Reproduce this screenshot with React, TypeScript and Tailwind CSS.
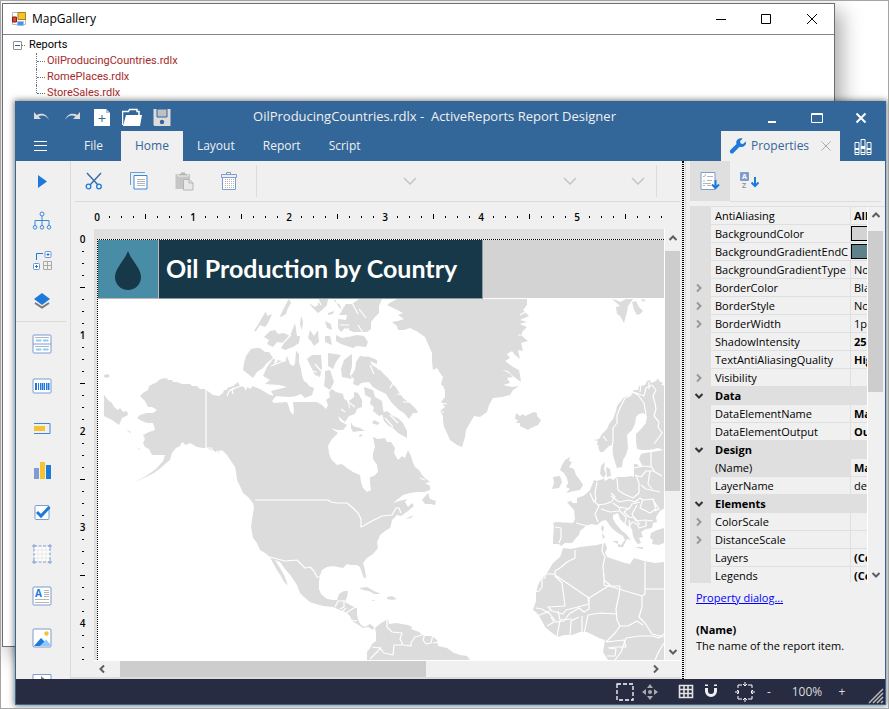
import { type ReactNode } from "react";
import clsx from "clsx";

const reports = ["OilProducingCountries.rdlx", "RomePlaces.rdlx", "StoreSales.rdlx"];

const ribbonTabs = ["File", "Home", "Layout", "Report", "Script"];

interface PropertyRow {
  name: string;
  value?: string;
  bold?: boolean;
  swatch?: string;
  expandable?: boolean;
  category?: boolean;
  selected?: boolean;
}

const properties: PropertyRow[] = [
  { name: "AntiAliasing", value: "All", bold: true },
  { name: "BackgroundColor", swatch: "bg-[#d3d3d3]" },
  { name: "BackgroundGradientEndColor", swatch: "bg-[#5f818c]" },
  { name: "BackgroundGradientType", value: "None" },
  { name: "BorderColor", value: "Black", expandable: true },
  { name: "BorderStyle", value: "None", expandable: true },
  { name: "BorderWidth", value: "1pt", expandable: true },
  { name: "ShadowIntensity", value: "25", bold: true },
  { name: "TextAntiAliasingQuality", value: "High", bold: true },
  { name: "Visibility", expandable: true },
  { name: "Data", category: true },
  { name: "DataElementName", value: "Map1", bold: true },
  { name: "DataElementOutput", value: "Output", bold: true },
  { name: "Design", category: true },
  { name: "(Name)", value: "Map1", bold: true, selected: true },
  { name: "LayerName", value: "default" },
  { name: "Elements", category: true },
  { name: "ColorScale", expandable: true },
  { name: "DistanceScale", expandable: true },
  { name: "Layers", value: "(Collection)", bold: true },
  { name: "Legends", value: "(Collection)", bold: true },
];

interface ChevronProps {
  dir: "up" | "down" | "left" | "right";
  className?: string;
}

const chevronPaths = {
  up: "M1.5 7 5 3.5 8.5 7",
  down: "M1.5 3 5 6.5 8.5 3",
  left: "M7 1.5 3.5 5 7 8.5",
  right: "M3 1.5 6.5 5 3 8.5",
};

function Chevron({ dir, className }: ChevronProps) {
  return (
    <svg viewBox="0 0 10 10" className={clsx("h-[10px] w-[10px]", className)} fill="none" stroke="currentColor" strokeWidth="2">
      <path d={chevronPaths[dir]} />
    </svg>
  );
}

function Icon({ size = 20, children }: { size?: number; children: ReactNode }) {
  return (
    <svg width={size} height={size} viewBox={`0 0 ${size} ${size}`} fill="none" className="shrink-0">
      {children}
    </svg>
  );
}

/* ---------- Gallery window ---------- */

function GalleryWindow() {
  return (
    <section className="absolute top-[2px] right-[53px] bottom-[61px] left-px flex flex-col border border-[#6e6e72] bg-white shadow-[6px_8px_20px_rgba(0,0,0,0.35)]">
      <header className="flex h-[31px] shrink-0 items-center border-b border-[#7f8589] pl-2">
        <Icon size={16}>
          <path d="M1.5 1.5h13v12h-13z" fill="#fff" stroke="#b9b9b9" />
          <path d="M7 1.500h7.500v7H7z" fill="#f6c32c" stroke="#a8801a" />
          <path d="M1.500 6h4v5h-4z" fill="#d64a32" stroke="#8c1b14" />
          <path d="M6.500 10.500h6v4h-6z" fill="#4f8fe6" stroke="#9dbdea" />
        </Icon>
        <h1 className="ml-[5px] flex-1 text-[12px] text-black">MapGallery</h1>
        <div className="flex text-black">
          <button aria-label="Minimize" className="flex h-7 w-[45px] items-center justify-center">
            <Icon size={12}><path d="M1 6.500h10" stroke="currentColor" /></Icon>
          </button>
          <button aria-label="Maximize" className="flex h-7 w-[46px] items-center justify-center">
            <Icon size={12}><path d="M1.500 1.500h9v9h-9z" stroke="currentColor" /></Icon>
          </button>
          <button aria-label="Close" className="flex h-7 w-[45px] items-center justify-center">
            <Icon size={12}><path d="m1 1 10 10M11 1 1 11" stroke="currentColor" /></Icon>
          </button>
        </div>
      </header>

      {/* Report tree */}
      <div className="pt-[2px] pl-[10px] font-['Roboto','Liberation_Sans',sans-serif] text-[11px] leading-4 text-black">
        <div className="flex items-center">
          <button aria-label="Collapse Reports" className="flex h-[9px] w-[9px] items-center justify-center rounded-[1px] border border-[#8f8f8f]">
            <span className="h-px w-[5px] bg-[#3b52a0]" />
          </button>
          <span className="mr-1 w-[3px] border-t border-dotted border-gray-500" />
          Reports
        </div>
        <ul className="ml-[23px]">
          {reports.map((name, i) => (
            <li key={name} className="flex h-4 text-[#a52a2a]">
              <span className={clsx("w-px border-l border-dotted border-gray-500", i === reports.length - 1 ? "h-2" : "h-4")} />
              <span className="mt-2 mr-[2px] w-2 border-t border-dotted border-gray-500" />
              <a href="#report">{name}</a>
            </li>
          ))}
        </ul>
      </div>
    </section>
  );
}

/* ---------- Designer title bar ---------- */

function TitleBar() {
  return (
    <header className="shrink-0 bg-[#336699] text-[#f0f0f0]">
      <div className="relative flex h-[30px] items-center justify-between pr-[2px] pl-[16px]">
        <div className="flex items-center gap-[10px] pt-1">
          <button aria-label="Undo">
            <Icon>
              <path d="M2 4v7h7L6.500 8.600C10 6.600 14 7.500 17 12 14.500 5.500 9 4.500 4.700 7z" fill="#dcdcdc" />
            </Icon>
          </button>
          <button aria-label="Redo">
            <Icon>
              <path d="M18 4v7h-7l2.500-2.400C10 6.600 6 7.500 3 12 5.500 5.500 11 4.500 15.300 7z" fill="#dcdcdc" />
            </Icon>
          </button>
          <button aria-label="New report">
            <Icon>
              <path d="M2 1h12l4 4v13H2z" fill="#fff" />
              <path d="M14 1v4h4z" fill="#a9c5e4" />
              <path d="M10 7v7M6.500 10.500h7" stroke="#336699" />
            </Icon>
          </button>
          <button aria-label="Open report">
            <Icon>
              <path d="M.5 17V3.500h6l1-2H15v2h2V7" stroke="#fff" strokeWidth="1.500" />
              <path d="m1 18 3-11h16l-2 11z" fill="#fff" />
            </Icon>
          </button>
          <button aria-label="Save report">
            <Icon>
              <path d="M1.500 1h17v17h-16l-1-1z" fill="#dcdcdc" />
              <path d="M5 1h10v8H5z" fill="#c0c0c0" stroke="#336699" />
              <circle cx="10" cy="14" r="2.200" fill="#336699" />
            </Icon>
          </button>
        </div>
        <h2 className="absolute inset-x-0 top-[6px] mx-auto w-fit pr-8 text-[13px] leading-[18px] whitespace-pre">
          OilProducingCountries.rdlx -{"  "}ActiveReports Report Designer
        </h2>
        <div className="flex pt-1">
          <button aria-label="Minimize designer" className="flex h-6 w-[44px] items-center justify-center">
            <Icon size={12}><path d="M2 10h8" stroke="#fff" strokeWidth="2" /></Icon>
          </button>
          <button aria-label="Maximize designer" className="flex h-6 w-[45px] items-center justify-center">
            <Icon size={12}><path d="M.5 1.500h11v9H.5zM.5 2.500h11" stroke="#fff" /></Icon>
          </button>
          <button aria-label="Close designer" className="flex h-6 w-[44px] items-center justify-center">
            <Icon size={12}><path d="m1.500 1.500 9 9M10.500 1.500l-9 9" stroke="#fff" strokeWidth="2" /></Icon>
          </button>
        </div>
      </div>

      <div className="flex h-[30px]">
        <button aria-label="Menu" className="flex w-[49px] items-center justify-center">
          <Icon size={14}><path d="M0 2.500h13M0 6.500h13M0 11.500h13" stroke="#fff" /></Icon>
        </button>
        <nav className="flex flex-1 pl-[5px] text-[12px]">
          {ribbonTabs.map((tab) => (
            <button
              key={tab}
              className={clsx("px-[14px]", tab === "Home" && "bg-[#f0f0f0] text-[#336699]", tab === "File" && "mr-1")}
            >
              {tab}
            </button>
          ))}
        </nav>
        <div className="flex w-[119px] items-center bg-[#f0f0f0] px-2 text-[12px] text-[#336699]">
          <Icon size={18}>
            <path
              d="M16.800 4.400 14 7.100l-2.300-.6-.7-2.300 2.700-2.800C11 .6 8 1.700 7.300 4.500c-.2 1 0 1.700.2 2.400L1.400 13c-1.700 2 .9 4.700 3 3l6.100-6.200c3.600 1.100 7.400-1.900 6.300-5.400z"
              fill="#1d7adb"
            />
          </Icon>
          <span className="ml-1 flex-1">Properties</span>
          <button aria-label="Close Properties">
            <Icon size={12}><path d="m1.500 1.500 9 9M10.500 1.500l-9 9" stroke="#aaa" /></Icon>
          </button>
        </div>
        <button aria-label="Library" className="flex w-[45px] items-center justify-center pt-[2px]">
          <Icon size={18}>
            <path d="M1 4.500h4v12H1zM7 1.500h4v15H7zM13 4.500h4v12h-4z" stroke="#fff" />
            <path d="M1 10h4v2H1zM7 8h4v3H7zM13 10h4v2h-4zM1 14h4v1H1zM7 14h4v1H7zM13 14h4v1h-4z" fill="#fff" />
          </Icon>
        </button>
      </div>
    </header>
  );
}

/* ---------- Left toolbox ---------- */

const viewTools: { label: string; icon: ReactNode }[] = [
  { label: "Preview", icon: <path d="m6 4 9 6.500L6 17z" fill="#1d7adb" /> },
  {
    label: "Report explorer",
    icon: (
      <path
        d="M10 5v10M3 15v-5.500h14V15M10 1a2 2 0 1 1 0 4 2 2 0 0 1 0-4zM3 14.500a1.800 1.800 0 1 1 0 3.600 1.800 1.800 0 0 1 0-3.600zM10 14.500a1.800 1.800 0 1 1 0 3.600 1.800 1.800 0 0 1 0-3.600zM17 14.500a1.800 1.800 0 1 1 0 3.600 1.800 1.800 0 0 1 0-3.600z"
        stroke="#3b88d8"
      />
    ),
  },
  {
    label: "Group editor",
    icon: (
      <>
        <path d="M4.500 9V2.500H11" stroke="#1d7adb" />
        <rect x="13" y=".5" width="6" height="6" rx="1" fill="#fff" stroke="#6f93cf" />
        <rect x="1.500" y="12.500" width="6" height="6" rx="1" fill="#fff" stroke="#6f93cf" />
        <path d="M16 2v3M14.500 3.500h3M4.500 14v3M3 15.500h3" stroke="#1d7adb" />
        <path d="M11.500 10.500h8v8h-8zM15.500 10.500v8M11.500 14.500h8" stroke="#aaa" />
      </>
    ),
  },
  {
    label: "Layers",
    icon: (
      <>
        <path d="m3 12 7 4.500 7-4.500" stroke="#7a7a7a" strokeWidth="2" />
        <path d="m10 2 8 6-8 6-8-6z" fill="#1d7adb" />
      </>
    ),
  },
];

const insertTools: { label: string; icon: ReactNode }[] = [
  {
    label: "Banded list",
    icon: (
      <>
        <rect x="1" y="1" width="18" height="18" rx="1" fill="#fff" stroke="#7f9bd0" />
        <path d="M1 10h18" stroke="#7f9bd0" />
        <path d="M3 3.500h14M3 12.500h14" stroke="#b5b5b5" />
        <path d="M4 6.500h5.500M11 6.500h5.500M4 15.500h5.500M11 15.500h5.500" stroke="#92c8fa" strokeWidth="2" />
      </>
    ),
  },
  {
    label: "Barcode",
    icon: (
      <>
        <rect x="1" y="3" width="18" height="14" rx="1" fill="#fff" stroke="#7f9bd0" />
        <path d="M4 7v7M10.500 7v7M16.500 7v7" stroke="#1d7adb" strokeWidth="2" />
        <path d="M6.500 7v7M8.500 7v7M12.500 7v7M14.500 7v7" stroke="#1d7adb" />
      </>
    ),
  },
  {
    label: "Bullet",
    icon: (
      <>
        <path d="M2 5.500h16v10H2" stroke="#3b88d8" />
        <path d="M2 8h11v5H2z" fill="#f6c333" />
      </>
    ),
  },
  {
    label: "Chart",
    icon: (
      <>
        <path d="M2 8h5v11H2z" fill="#7f9bd0" />
        <path d="M8 2h5v17H8z" fill="#f6c333" />
        <path d="M14 5h5v14h-5z" fill="#1d7adb" />
      </>
    ),
  },
  {
    label: "Check box",
    icon: (
      <>
        <rect x="3" y="3.500" width="14" height="14" rx="1" fill="#fff" stroke="#7f9bd0" />
        <path d="m5 10 4 4 8.500-9" stroke="#1d7adb" strokeWidth="3" />
      </>
    ),
  },
  {
    label: "Container",
    icon: (
      <>
        <path d="M2 2h16v16H2z" fill="#fff" />
        <path d="M6 2v16M10 2v16M14 2v16M2 6h16M2 10h16M2 14h16" stroke="#e8e8e8" />
        <path d="M2 2h16v16H2z" stroke="#7f9bd0" strokeDasharray="3 1.500" />
        <path d="M1 1h2v2H1zM17 1h2v2h-2zM1 17h2v2H1zM17 17h2v2h-2z" fill="#fff" stroke="#7f9bd0" />
      </>
    ),
  },
  {
    label: "Formatted text",
    icon: (
      <>
        <rect x="1" y="1" width="18" height="18" rx="1" fill="#fff" stroke="#7f9bd0" />
        <text x="3" y="11" fontSize="10" fontWeight="700" fill="#1d7adb">A</text>
        <path d="M12 4.500h5M12 6.500h5M12 8.500h5M12 10.500h5M3 13.500h14M3 16.500h14" stroke="#b5b5b5" />
      </>
    ),
  },
  {
    label: "Image",
    icon: (
      <>
        <rect x="1" y="1" width="18" height="18" rx="1" fill="#fff" stroke="#7f9bd0" />
        <path d="m8 18 6-6.500 5 5.500v1z" fill="#92c8fa" />
        <path d="m2 18 7-8 3.500 3.500L8 18z" fill="#1d7adb" />
        <circle cx="14.500" cy="5.500" r="2.200" fill="#f6c333" />
      </>
    ),
  },
  {
    label: "Input field",
    icon: (
      <>
        <path d="M1 4.500h18V19H1z" fill="#fff" stroke="#7f9bd0" />
        <path d="M9 6v10l6-5z" fill="#777" />
      </>
    ),
  },
];

function Toolbox() {
  return (
    <aside className="flex w-[55px] shrink-0 flex-col overflow-hidden border-r border-[#dcdcdc]">
      {viewTools.map(({ label, icon }) => (
        <button key={label} aria-label={label} className="flex h-10 w-[52px] shrink-0 items-center justify-center">
          <Icon>{icon}</Icon>
        </button>
      ))}
      <hr className="mr-1 mb-px shrink-0 border-[#dcdcdc]" />
      {insertTools.map(({ label, icon }) => (
        <button key={label} aria-label={label} className="flex h-[42px] w-[52px] shrink-0 items-center justify-center">
          <Icon>{icon}</Icon>
        </button>
      ))}
    </aside>
  );
}

/* ---------- Ribbon ---------- */

function RibbonSelect({ label, className }: { label: string; className: string }) {
  return (
    <div className={clsx("relative flex items-center justify-end", className)}>
      <select disabled aria-label={label} className="absolute inset-0 w-full appearance-none bg-transparent" />
      <svg width="14" height="8" viewBox="0 0 14 8" fill="none" stroke="#c4c4c4" strokeWidth="1.500">
        <path d="m1 1 6 6 6-6" />
      </svg>
    </div>
  );
}

function Ribbon() {
  return (
    <div className="ml-1 flex h-[41px] shrink-0 border-b border-[#dcdcdc]">
      <button aria-label="Cut" className="flex w-[37px] items-center justify-center">
        <Icon>
          <path d="m3 2 11 12M17 2 6 14" stroke="#3b6fa8" strokeWidth="1.500" />
          <circle cx="4.500" cy="15.500" r="2.300" stroke="#1d7adb" strokeWidth="1.300" />
          <circle cx="15" cy="15.500" r="2.300" stroke="#1d7adb" strokeWidth="1.300" />
        </Icon>
      </button>
      <button aria-label="Copy" className="ml-[8px] flex w-[37px] items-center justify-center">
        <Icon>
          <path d="M1.500 14V1.500H16" stroke="#6f9bd0" />
          <path d="M5 4.500h13V18H5z" fill="#fff" stroke="#3b88d8" />
          <path d="M8 8.500h8M8 10.500h8M8 12.500h8M8 14.500h8" stroke="#b5b5b5" />
        </Icon>
      </button>
      <button aria-label="Paste" className="ml-[8px] flex w-[37px] items-center justify-center">
        <Icon>
          <path d="M1.500 3H16v5h-5v10H1.500z" fill="#c6c6c6" />
          <path d="M4 5h10V2.500h-2.500V1h-5v1.500H4z" fill="#b5b5b5" stroke="#f0f0f0" />
          <path d="M9.500 8.500h6L19 12v7H9.500z" fill="#e9e9e9" stroke="#b5b5b5" />
          <path d="M15 8.500V12h4" stroke="#b5b5b5" />
        </Icon>
      </button>
      <button aria-label="Delete" className="ml-[8px] mr-[9px] flex w-[37px] items-center justify-center">
        <Icon>
          <path d="M3.500 6h13v12.500h-13z" fill="#fff" stroke="#7f9bd0" />
          <path d="M2.500 3.500h15v3h-15zM7.500 3V1.500h4V3" fill="#f0f0f0" stroke="#7f9bd0" />
          <path d="M6.500 8v9M8.500 8v9M10.500 8v9M12.500 8v9M14.500 8v9" stroke="#b5b5b5" strokeDasharray="1 1" />
        </Icon>
      </button>
      <div className="my-1 flex flex-1 border-l border-[#dcdcdc]">
        <RibbonSelect label="Font family" className="w-[160px]" />
        <RibbonSelect label="Font style" className="flex-1" />
        <RibbonSelect label="Font size" className="w-[68px]" />
        <span className="ml-[11px] border-l border-[#dcdcdc] pr-6" />
      </div>
    </div>
  );
}

/* ---------- Rulers ---------- */

function Ruler({ vertical }: { vertical?: boolean }) {
  const steps = vertical ? 36 : 48;
  return (
    <div
      className={clsx(
        "flex shrink-0 overflow-hidden text-[10px] leading-3 font-semibold text-black",
        vertical ? "w-[23px] flex-col pt-1" : "h-[27px] pl-5",
      )}
    >
      {Array.from({ length: steps }, (_, i) => (
        <span
          key={i}
          className={clsx("flex shrink-0 items-center justify-center", vertical ? "h-3" : "w-3 pt-[2px]")}
        >
          {i % 8 === 0 ? (
            i / 8
          ) : i % 4 === 0 ? (
            <span className={clsx("bg-black", vertical ? "h-px w-[5px]" : "h-[5px] w-px")} />
          ) : (
            <span className={clsx("bg-black", vertical ? "h-px w-[2px]" : "h-[2px] w-px")} />
          )}
        </span>
      ))}
    </div>
  );
}

/* ---------- Map ---------- */

const land = [
  // North and Central America
  "M140 396l3-3 5-3 1-4 8-4 2-2 5-2 2 1 0-2 2 3 4 0 1 2 4 0 5 2 8 0 2 2 5 0 3 3 5 0 4 3 4 3 6 1 4-3 1-3 3 0 0-2 6-2 5-4 2 4 4 1 2 4 1-4 4 2 1-3 8 3 5 3 5 3 6 1-4 5 2 2 13-1 2 5 1 4 3 4 1-3-1-10 24 0L322 405 326 409 328 405 326 400 330 397 329 392 332 389 336 392 343 394 344 399 348 401 349 409 353 404 356 410 355 414 349 416 345 422 338 416 340 421 347 425 343 430 337 430 331 428 338 433 335 436 332 439 328 446 329 453 331 459 337 465 342 464 347 468 353 472 360 475 361 482 363 488 367 492 371 490 370 484 370 477 374 476 378 472 377 465 373 459 373 453 375 447 373 437 378 439 385 438 387 442 391 442 395 448 394 453 398 460 402 456 405 458 408 450 411 456 413 463 415 467 419 470 422 475 425 478 430 482 425 483 430 486 430 490 424 492 417 492 410 493 403 495 398 499 393 503 399 501 407 499 405 502 408 507 412 503 414 506 408 511 401 516 397 515 392 520 391 525 390 528 385 531 380 535 379 538 377 542 378 548 373 554 367 558 363 563 365 570 366 578 364 578 362 573 360 567 357 565 351 565 347 564 343 568 338 567 333 566 327 567 322 570 320 575 319 582 319 589 321 594 327 599 333 600 337 600 339 594 344 591 348 591 347 597 345 602 352 606 357 608 357 614 358 620 361 625 365 627 370 624 374 627 373 630 368 627 363 628 357 624 352 621 350 616 347 613 340 610 333 607 323 606 316 604 310 602 304 597 300 593 297 585 291 576 285 569 280 562 275 560 280 568 284 575 288 585 284 582 281 576 277 570 273 563 270 557 265 553 260 550 257 543 253 538 252 532 251 527 252 520 253 513 254 508 253 503 248 497 243 493 240 486 237 480 236 472 235 467 231 461 227 455 222 450 218 453 213 451 207 448 203 448 197 447 190 443 186 445 182 442 180 446 176 448 172 453 170 460 166 463 162 467 154 473 146 477 133 483 146 476 156 469 163 461 165 455 159 455 152 455 149 449 145 447 143 443 145 439 143 435 149 432 155 430 154 426 153 423 147 423 142 421 137 418 140 415 147 413 153 413 157 410 152 407 148 407 145 401z",
  // Aleutian tip and Siberia
  "M104 395l5 6 2 1 4 6 3 2 2-2 3 4 4-1 1 4-6 3-3 7-7-5-8-4zM104 375l4-1 2 2-3 2-3-1zM126 429l5 3-1 1zM138 448l2 1-1 1z",
  // Arctic archipelago
  "M251 349l5-1 4 0 5 4 4 0 4 6-6 5-4 5-6 4-4 6-5-4-5-4 1-7 2-7z",
  "M273 359l-6 8-4 9 7 4-5 4 14 1 8 2-8 2-8 2 3 5 16 1 6-1 5-2 4 4 7-3 2-7-5-2-2-3-3-2-2-5-1-7-2-7 0-8-3-3-1 13-2 2-3-2-3-8-2 6-7-2-4 6 1-7z",
  "M254 331l5-8 4-7 3-5 1 5 5-2-4 9-3 4-5-2-4 6zM264 337l6-6 5-1 3 4 6-1 6 3 5-13 2 13 3 0-1 7-6 4-8 3-4-2 3-5-7-1-4 5-6-3 2-4z",
  "M280 316l4-8 3-6 2-3 2 4-3 5-2 6-5 3zM306 299l3 4 6 4 3-2 1-6 3 0 6 0-1 6-5 5-4 3-6-6zM301 316l2 5-1 9-2-5zM328 313l6-2-1 3-5 1zM310 330l4 6 4-6 1 12-5 4-3-5-3-3z",
  "M312 355l9 0 1 12-2 10-5-2-5-10-3-6zM325 321l6 3 1 6-5-2zM325 336l5 0 2 9-7-3zM328 353l13 2-5 7-3 7-5-3zM325 371l5-1 4 12-4 8-6-4 1-8z",
  "M335 299l3 7 4 4 4-6 6 0 7-5 23 0-3 7 0 7-4 4-4 5 0 7-4 3-14 0-8-4-4 4-3-4 0-9 8 1 1-5-8 0 3-4-2-6-6-4zM336 335l6 3 15-3 7 1 4 6-2 5-9-1-4 2-12-4-5-3z",
  "M344 360l5-4 3-2 0 12-2 8 2 5-5-1-5-1-1-8z",
  "M360 356l8 1 4 8 8 5 7 7 8 9 5 8 4 5 6 4 6 6 2 4-5 0-4 6-5-6-5-3-8-8-5-8-8-4-5-3-4-5-8 1-3 3-5-2 1-5-3-3 4-6 1-8zM367 356l10 4 0 4-7-3z",
  "M354 392l4 1 4 7 0 7-5 2-2 4-5-4-1-8 5-4zM364 387l9 3 2 7 7 4 1 8 1 5-5 2-6-5 1-4-4-3 1-6-6-3zM382 413l5-2 6 5 5 2 5 5 4 8 0 7-9-5-5-5-4-2-5-5zM351 422l2 4 7 2 5 3-5 0-7 1-2-4zM360 434l3 2-4 1zM374 420l6 3-3 2-5-2z",
  // Greenland and Iceland
  "M397 299L391 302 387 305 395 309 403 313 398 315 404 319 398 321 392 322 397 326 398 330 404 330 410 328 418 332 425 337 428 344 432 353 432 362 433 370 437 368 440 373 443 377 441 384 445 390 445 397 441 402 445 407 440 411 443 416 443 420 444 427 447 433 450 440 457 445 462 447 465 437 466 430 470 423 474 416 480 417 487 412 489 405 493 398 502 397 510 395 513 390 519 386 512 387 503 385 510 383 507 378 513 377 509 373 502 370 508 371 513 376 521 382 520 375 519 370 513 367 505 361 510 358 507 354 512 351 515 355 520 359 518 350 523 351 521 343 528 341 522 336 522 332 527 327 520 324 527 322 520 320 529 316 523 310 527 305 527 299z",
  "M516 413l4 3 3-2 2 2 9-4 3 1 0 3 4 4-3 5-7 3-3 2-8-4 0-3-4 0 2-3-3-1z",
  // Svalbard
  "M612 299l4 1 4 2 6-3 7 0-5 7-1 6-3 11-4-7-3-2-1-7 4-1zM632 302l4-1 3 6 4 4-3 3-3 1-3-5zM641 299l5 1-3 2z",
  // Scandinavia
  "M594 440l5-1 3-5 5-5 2-5 4-5 3-8 1-5 4-5 3-4 5-1 5-6 4 0 1-4 6-1 2-4 3-1 1 3 5-2 2-3 1 3 4 2-2 2 5 1 3 3 0 61-6 0-5-2-7 2-9 0-5-1-1-7 0-8 5-5 5-6 1-7-4-3-4 1-3 3-1 7-3 6-5 5 1 13-2 7-3 5-1 7-5 1-2-6-2-7-1-10-3 1-6 6-3 0-3-8 1-3z",
  // Eurasian mainland
  "M664 450l-12 2-7 1-4 1-2 5 3 6-2 3-3-4-3 0 0 13-3-1-5 1-9 0-4 3-3-2-5 3-2-4-3-3 1-8 4-4-1 7 2 5-3 5-6 2-3-1-2 5-2 5-4 4-3 2-6 2 0 5-5 0 0-2-5 1 4 5 3 3 1 9-2 4-17-1-3 1 1 3-1 13 0 5 6 0 2 2 4-3 7 0 4-5 3-3 1-4 6-5 5-2 6 1 5-4 4-1 4 6 4 4 4 3 5 3 2 4-4 5-3-1 0 3 5 0 3-6 1-2 4 1-5-6-5-4-5-6-3-5 0-4 5-2 2 6 5 5 7 5 1 7 3 6 2 2 3-1-2-5 4-1-2-5 5-3 6-1 1-5 4-1-1-5 4-6 5-3 6 0z",
  "M664 528l-7 2-6 3-1 5 3 2-1 4 7 1 5-2z",
  // Islands
  "M565 460l5-3-1 4 3 1-3 5 5 2 2 6 4 5 3 5-3 5-6 1-8 2 4-4-4-2 2-4-1-5-3-5-4-3 2-5zM553 477l7-1 2 6-3 6-7 1 2-6zM602 525l2 2-1 5-2-3zM602 533l3 4-2 2zM612 541l6 0 0 3zM636 547l7 0 0 2-6-1zM606 467l4 2 1 7-4 1z",
  // Africa
  "M563 548L571 549 580 547 597 545 605 543 607 548 605 553 607 557 616 560 625 563 630 564 634 558 644 561 655 563 664 562 664 660 608 660 603 652 604 646 605 640 599 638 593 635 587 632 580 632 572 635 564 635 558 637 551 632 545 627 541 619 537 613 533 610 536 601 536 593 538 585 542 578 547 573 553 563 560 557 562 552z",
  // South America and the Caribbean
  "M367 660l0-8 3-4 2-4 4-3 0-8-1-5 6-5 7-4 1 5 7-1 12 2 4 2-1 2 8 3 5 4 8 0 5 4 1 6 9 2 7 5 6 2 7 1 3 4z",
  "M359 588l8-1 7 4 7 3-7 0-5-3-6-1zM387 597l5-1 5 3-5 1-5-1zM372 600l4 1-4 0zM422 500l6-7 2 6 6 2-1 4-5-1-5 0zM405 519l9-4-3 3z",
];

const borders = [
  "M206 389v59l5 0 4 5 5-2 8 10 6 8M255 500H328L331 502 337 503 347 503 353 508 358 513 361 519 361 527 365 525 370 522 376 519 382 516 392 515 396 508 399 508 401 513",
  "M270 557L285 561 297 560 301 564 305 568 310 567 314 571 317 577 321 577M335 607l3-6 6 0M344 600l0 7-4 2M342 612l4-4M346 613l6-4 6-3M351 620l6 1",
  "M387 619l0 8 5 5 10 1-2 6 3 6 8 1 0-3 4-6 7-2-2-5 3-3M422 628l3 6-2 6 3 4 5-1 2-9M433 643l7-1 1-7M372 647l8 1 4 5 9 2 1-10 8 0M370 659l8-8 3-4",
  // Nordic and eastern Europe
  "M613 476l-3-14 1-8 2-13 0-13 4-5 0-8 4-9 4-8 5-2 3-4 5 3 6 8 2 12M634 392l10 4 2-8 6-3 4 5-3 6 2 7 1 6-2 7 5 6-1 5 4 6-8 11M651 449l0 17 4 6 7 4M634 468l9-2 9 1M635 475l6 2 5-6 9 0",
  "M617 478l1 12 6 4 9 4 6-5 0-10-3-8M597 482l-2 11 1 7-3 2M590 493l3 7 6 6-4 8 3 8M576 523l11 3M555 527l6 1 0 10-2 5M611 493l4 4-4 5-6 2-8 1M611 496l8 6 10-2 6 2 5-4 3 2 10-1 1 3M613 503l7 5-1 3-9 1-9-3M620 507l9 2 3-5 8-2M629 508l-5 4 5 5 6 1 5 7M637 505l-5 9 4 7 9-1 8 1M643 499l-3 9 10 5 6-4-3-10M620 511l6 6-1 8M629 527l3-5 5 2 2 4 7-2 0-5M641 485l5 4 14 3M650 471l-2 13 4 5M630 528l-1-8M653 500l6 9-4 2",
  // Africa
  "M575 550v8l-8 4-7 6-5 3v4l34 23 21-13-6-5-1-14 2-9-3-6 1-8M604 574l0 11 5 1 33 10 3-2V562M645 589h20M555 574l-10 0 0 4-3 0 0 9-3 4-4 1M555 576l7 7 3 23-17 1 4 4 11 3 3-4 8-2 15-4-1-6M589 598l0 11-5 3-5-4-10 6-5 7-8 1-6-8-8-5-6-1",
  "M642 596l0 11-3 10 6 6 7 11 12 3M610 586l10 0-1 9-3 14 1 11 3 6-5 7-9 9M588 615l12-2 16 1M588 615l-4 19M582 616v17M579 617l-8 4-1 15M572 619l-12 1-2-9M560 620l-3 17M550 611l-13 5M551 617l3 5-7 4M620 626l8 0 9-5 6 4M606 642l18-2 2 7-10 0-8 1M626 638l13-2 14 0 6 2 5-4M626 638l-5 14-6 8M609 648l7 1-1 7-8 0M664 643l-5 8-4 9",
];

const inletLines = [
  "M233 394l-1-4 3-2 6-2M227 396l2-5 5-3M399 386l-6-1M404 395l-7-1M410 402l-7 0M374 374l-4-9M382 364l-4 6M394 381l-4 7M271 366l15-6M283 343l8-8M352 303l6 11M366 318l-7-9M340 325l9 0M350 337l-2-9M363 333l-5-8M321 305l-3-6M444 387l-6-2M447 404l-8-1M444 412l-5 0M398 312l-3 6M420 478l5 2M223 457l6 6M217 451l-3 4",
  "M527 311l-7 4M529 325l-8-1M524 335l-6 0M599 446l-6 1M603 436l4 5M640 392l1-7M649 389l0-7M315 364l6 7M312 371l5 1M345 412l-4-3M347 401l8 6M385 418l8 9M390 415l8 8",
];

function WorldMap() {
  return (
    <svg width="566" height="361" viewBox="98 299 566 361" className="block" role="img" aria-label="World map">
      <g fill="#dcdcdc">
        {land.map((d) => (
          <path key={d} d={d} />
        ))}
      </g>
      <g fill="none" stroke="#fff" strokeWidth="1.200" strokeLinejoin="round">
        {borders.map((d) => (
          <path key={d} d={d} />
        ))}
        {inletLines.map((d) => (
          <path key={d} d={d} />
        ))}
      </g>
    </svg>
  );
}

/* ---------- Design surface ---------- */

function DesignSurface() {
  return (
    <div className="flex min-h-0 flex-1 pr-px">
      <Ruler vertical />
      <div className="flex min-w-0 flex-1 flex-col bg-[#dfdfdf] pt-[10px] pl-[3px]">
        <div className="flex min-h-0 flex-1 flex-col border-t border-l border-dotted border-black bg-white">
          <div className="flex h-[59px] shrink-0">
            <div className="flex w-[61px] items-center justify-center border-r border-b border-[#b9b9b9] bg-[#488ca6]">
              <svg width="28" height="40" viewBox="0 0 28 40" className="mt-1">
                <path d="M14 0c3 9 13 17 13 26a13 13 0 0 1-26 0C1 17 11 9 14 0z" fill="#173848" />
              </svg>
            </div>
            <h3 className="flex w-[324px] items-center border-r border-b border-[#8b9ba2] bg-[#173848] pb-[2px] pl-[7px] font-['Lato',sans-serif] text-[25px] leading-8 font-bold whitespace-nowrap text-white">
              Oil Production by Country
            </h3>
            <div className="mb-px flex-1 bg-[#d3d3d3]" />
          </div>
          <div className="min-h-0 flex-1 overflow-hidden">
            <WorldMap />
          </div>
        </div>
      </div>

      {/* Vertical scroll bar */}
      <div className="flex w-4 shrink-0 flex-col border-l border-white text-[#5e5e5e]">
        <button aria-label="Scroll up" className="flex h-[22px] items-center justify-center pb-1">
          <Chevron dir="up" />
        </button>
        <div className="flex-1">
          <div className="h-[61%] bg-[#cdcdcd]" />
        </div>
        <button aria-label="Scroll down" className="flex h-4 items-center justify-center">
          <Chevron dir="down" />
        </button>
      </div>
    </div>
  );
}

/* ---------- Properties panel ---------- */

function PropertiesPanel() {
  return (
    <aside className="flex w-[200px] shrink-0 flex-col border-l border-[#dcdcdc] pl-1">
      <div className="flex h-10 shrink-0">
        <button aria-label="Categorized" className="flex w-10 items-center justify-center bg-[#dfdfdf]">
          <Icon>
            <path d="M1 1.500h14v17H1z" fill="#fff" stroke="#7f9bd0" />
            <path d="m3 5 1 1 2-3M3 10h2M3 14.500h2M7 5.500h6M7 9.500h5M7 14.500h4M3 12.500h8" stroke="#b5b5b5" />
            <path d="M15.500 9v8M12 13.500l3.500 3.500 3.500-3.500" stroke="#1d7adb" strokeWidth="2" />
          </Icon>
        </button>
        <button aria-label="Sort alphabetically" className="flex w-10 items-center justify-center">
          <Icon>
            <rect x="0" y="1" width="9" height="9" rx="1" fill="#7f9bd0" />
            <text x="2" y="8" fontSize="7" fontWeight="700" fill="#fff">A</text>
            <text x="2" y="17" fontSize="7" fontWeight="700" fill="#999">Z</text>
            <path d="M15 6v9M11.500 11.500 15 15l3.500-3.500" stroke="#1d7adb" strokeWidth="2" />
          </Icon>
        </button>
      </div>
      <hr className="mr-1 ml-10 shrink-0 border-[#dcdcdc]" />

      <div className="mt-1 flex h-[377px] shrink-0 overflow-hidden border-t border-[#dfdfdf]">
        <div className="min-w-0 flex-1 overflow-hidden">
          <table className="w-full table-fixed border-separate border-spacing-0 text-[11px] leading-[17px] text-black">
            <colgroup>
              <col className="w-[21px]" />
              <col />
              <col className="w-[17px]" />
            </colgroup>
            <tbody>
              {properties.map((row) => (
                <tr key={row.name} className={clsx("h-[18px]", row.category && "bg-[#dfdfdf]")}>
                  <td className="bg-[#dfdfdf] p-0">
                    {(row.expandable || row.category) && (
                      <button
                        aria-label={`Toggle ${row.name}`}
                        className={clsx("ml-1 flex h-[17px] items-center", row.category ? "text-[#333]" : "text-[#999]")}
                      >
                        <Chevron dir={row.category ? "down" : "right"} />
                      </button>
                    )}
                  </td>
                  {row.category ? (
                    <th colSpan={2} className="border-b border-[#dfdfdf] p-0 pl-1 text-left font-bold">
                      {row.name}
                    </th>
                  ) : (
                    <>
                      <td
                        className={clsx(
                          "border-b border-[#dfdfdf] p-0 pr-[2px] pl-1 whitespace-nowrap",
                          row.selected && "bg-[#dfdfdf]",
                        )}
                      >
                        <div className="overflow-hidden">{row.name}</div>
                      </td>
                      <td
                        className={clsx(
                          "overflow-hidden border-b border-l border-[#dfdfdf] p-0 whitespace-nowrap",
                          row.bold && "font-bold",
                          !row.swatch && "pl-[3px]",
                        )}
                      >
                        {row.swatch ? (
                          <div className={clsx("h-[15px] w-5 border border-black", row.swatch)} />
                        ) : (
                          row.value
                        )}
                      </td>
                    </>
                  )}
                </tr>
              ))}
            </tbody>
          </table>
        </div>
        <div className="mr-[2px] flex w-4 shrink-0 flex-col border-l border-white text-[#5e5e5e]">
          <button aria-label="Scroll properties up" className="flex h-6 items-center justify-center pb-2">
            <Chevron dir="up" />
          </button>
          <div className="flex-1">
            <div className="h-[48%] bg-[#cdcdcd]" />
          </div>
          <button aria-label="Scroll properties down" className="flex h-4 items-center justify-center">
            <Chevron dir="down" />
          </button>
        </div>
      </div>

      <div className="pt-[7px] pl-[6px] text-[11px] leading-4">
        <a href="#dialog" className="text-[#0000ff] underline">
          Property dialog...
        </a>
        <p className="mt-4 font-bold text-black">(Name)</p>
        <p className="text-black">The name of the report item.</p>
      </div>
    </aside>
  );
}

/* ---------- Status bar ---------- */

function StatusBar() {
  return (
    <footer className="flex h-[25px] shrink-0 items-center justify-end bg-[#272c42] text-[12px] text-[#dcdcdc]">
      <button aria-label="Select area" className="mr-[5px]">
        <Icon><path d="M2 2h16v16H2z" stroke="#fff" strokeDasharray="4 2" strokeWidth="1.300" /></Icon>
      </button>
      <button aria-label="Pan" className="mr-4">
        <Icon>
          <path d="m10 2 3 4H7zM10 18l3-4H7zM2 10l4-3v6zM18 10l-4-3v6z" fill="#aaa" />
          <circle cx="10" cy="10" r="2" fill="#aaa" />
        </Icon>
      </button>
      <button aria-label="Show grid" className="mr-[5px]">
        <Icon>
          <path d="M3.500 3.500h13v12h-13zM8 3v13M12 3v13M3 7.500h14M3 11.500h14" stroke="#e4e4e4" strokeWidth="1.600" />
        </Icon>
      </button>
      <button aria-label="Snap to grid" className="mr-[14px]">
        <Icon>
          <path d="M5.500 6v3a4.500 4.500 0 0 0 9 0V6" stroke="#f0f0f0" strokeWidth="3" />
          <path d="M4 2.500h3V4H4zM13 2.500h3V4h-3z" fill="#f0f0f0" />
        </Icon>
      </button>
      <button aria-label="Fit page" className="mr-[11px]">
        <Icon>
          <path d="M3 6V3h4M13 3h4v3M17 14v3h-4M7 17H3v-3M3 8v1M17 8v1M3 11v1M17 11v1" stroke="#fff" />
          <path d="M10 0v4M8 2l2 2 2-2M10 20v-4M8 18l2-2 2 2M0 10h4M2 8l2 2-2 2M20 10h-4M18 8l-2 2 2 2" stroke="#fff" />
        </Icon>
      </button>
      <button aria-label="Zoom out" className="mr-1 w-[6px]">-</button>
      <span className="w-[62px] text-center">100%</span>
      <button aria-label="Zoom in" className="mr-[22px] w-2">+</button>
      <svg width="16" height="16" viewBox="0 0 16 16" className="mr-px self-end" stroke="#b9b9b9" strokeWidth="1.500">
        <path d="M1 15 15 1M5 15 15 5M9 15l6-6M13 15l2-2" />
      </svg>
    </footer>
  );
}

function DesignerWindow() {
  return (
    <section className="absolute top-[100px] right-[2px] bottom-[3px] left-[14px] flex flex-col border-x border-b border-[#336699] bg-[#f0f0f0] shadow-[0_0_6px_1px_rgba(0,0,0,0.5)]">
      <TitleBar />
      <div className="flex min-h-0 flex-1">
        <Toolbox />
        <main className="flex min-w-0 flex-1 flex-col border-b-2 border-[#dcdcdc]">
          <Ribbon />
          <Ruler />
          <DesignSurface />

          {/* Horizontal scroll bar */}
          <div className="ml-[23px] flex h-[17px] shrink-0 items-stretch border-t border-white pr-[17px] text-[#5e5e5e]">
            <button aria-label="Scroll left" className="mr-[10px] flex w-4 items-center justify-center">
              <Chevron dir="left" />
            </button>
            <div className="flex-1">
              <div className="h-full w-[58%] bg-[#cdcdcd]" />
            </div>
            <button aria-label="Scroll right" className="flex w-4 items-center justify-center">
              <Chevron dir="right" />
            </button>
          </div>
        </main>
        <div className="mx-px w-[2px] border-x border-dotted border-black" />
        <PropertiesPanel />
      </div>
      <StatusBar />
    </section>
  );
}

export default function App() {
  return (
    <div className="relative h-screen min-h-[600px] overflow-hidden border border-[#a5a5a5] bg-white font-['Open_Sans','Noto_Sans',sans-serif]">
      <GalleryWindow />
      <DesignerWindow />
    </div>
  );
}
